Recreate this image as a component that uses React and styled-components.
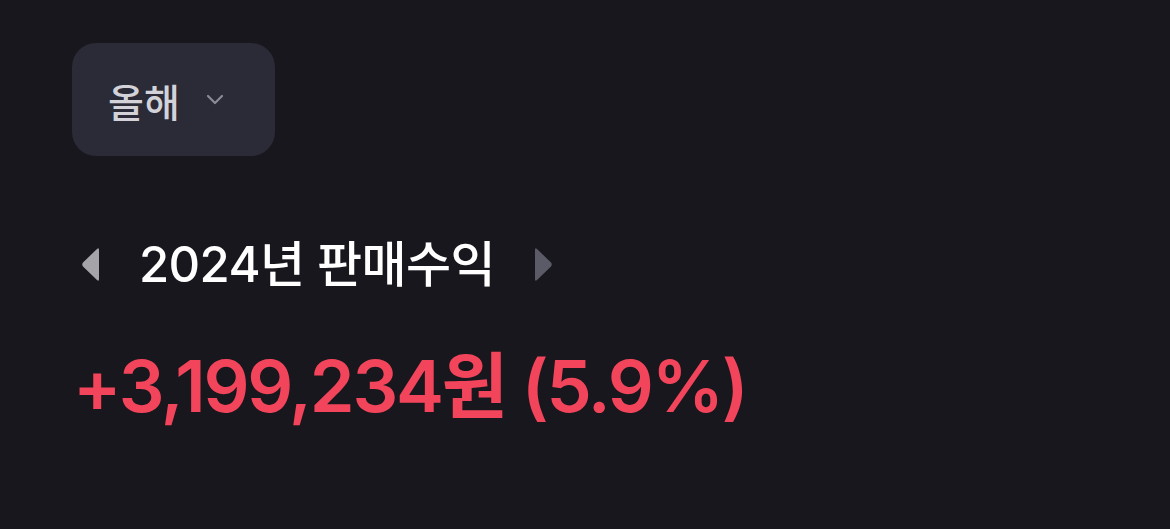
import styled, { createGlobalStyle } from 'styled-components'

const GlobalStyle = createGlobalStyle`
  html, body {
    margin: 0;
    padding: 0;
    background: #18171d;
  }
  body {
    font-family: Inter, "Noto Sans CJK KR", sans-serif;
    -webkit-font-smoothing: antialiased;
  }
`

const Page = styled.div`
  min-height: 100vh;
  box-sizing: border-box;
  padding: 43px 0 0 72px;
  display: flex;
  flex-direction: column;
  align-items: flex-start;
`

const PeriodButton = styled.button`
  display: flex;
  align-items: center;
  gap: 26px;
  height: 113px;
  width: 203px;
  box-sizing: border-box;
  padding: 0 0 0 36px;
  border: none;
  border-radius: 24px;
  background: #2a2b37;
  color: #d2d2d8;
  font-family: inherit;
  font-size: 39px;
  font-weight: 500;
  cursor: pointer;
`

const TitleRow = styled.div`
  display: flex;
  align-items: center;
  margin-top: 84px;
  margin-left: 8px;
  gap: 37px;
`

const Title = styled.h2`
  margin: 0;
  color: #ffffff;
  font-size: 49px;
  font-weight: 500;
  letter-spacing: -0.6px;
  line-height: 1;
`

const Arrow = styled.button`
  display: flex;
  padding: 0;
  border: none;
  background: none;
  color: ${(p) => (p.disabled ? '#5a5b67' : '#a4a4a9')};
  cursor: ${(p) => (p.disabled ? 'default' : 'pointer')};
`

const Amount = styled.div`
  margin-top: 61px;
  margin-left: 1px;
  color: #f2445a;
  font-size: 72px;
  font-weight: 600;
  letter-spacing: -2.2px;
  line-height: 1;
`

function Chevron() {
  return (
    <svg width="18" height="11" viewBox="0 0 18 11" fill="none">
      <path d="M2 2l7 7 7-7" stroke="#8a8b98" strokeWidth="2.2" strokeLinecap="round" strokeLinejoin="round" />
    </svg>
  )
}

function Triangle({ dir }) {
  const d = dir === 'left'
    ? 'M19 3 L19 32 Q19 35 17 33 L3 19.5 Q1.5 17.5 3 15.5 L17 2 Q19 0 19 3 Z'
    : 'M3 3 L3 32 Q3 35 5 33 L19 19.5 Q20.5 17.5 19 15.5 L5 2 Q3 0 3 3 Z'
  return (
    <svg width="22" height="35" viewBox="0 0 22 35">
      <path d={d} fill="currentColor" />
    </svg>
  )
}

export default function App() {
  return (
    <>
      <GlobalStyle />
      <Page>
        <PeriodButton>
          올해
          <Chevron />
        </PeriodButton>
        <TitleRow>
          <Arrow aria-label="이전">
            <Triangle dir="left" />
          </Arrow>
          <Title>2024년 판매수익</Title>
          <Arrow disabled aria-label="다음">
            <Triangle dir="right" />
          </Arrow>
        </TitleRow>
        <Amount>+3,199,234원 (5.9%)</Amount>
      </Page>
    </>
  )
}
